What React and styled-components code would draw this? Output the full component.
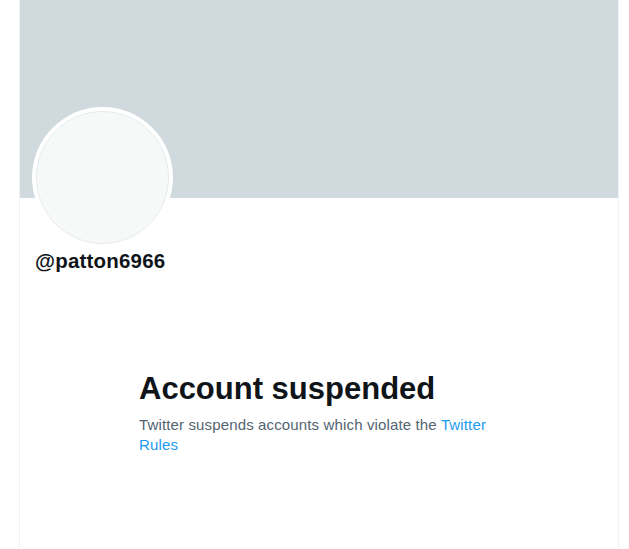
import React from 'react'
import styled, { createGlobalStyle } from 'styled-components'

const Global = createGlobalStyle`
  html, body { margin: 0; padding: 0; background: #ffffff; }
  body { font-family: "Liberation Sans", Arial, sans-serif; }
`

const Column = styled.main`
  margin-left: 19px;
  width: 598px;
  min-height: 549px;
  border-left: 1px solid #eff3f4;
  border-right: 1px solid #eff3f4;
  display: flex;
  flex-direction: column;
`

const Banner = styled.div`
  height: 198px;
  background: #cfd9de;
`

const ProfileHead = styled.div`
  padding: 0 12px;
  display: flex;
  flex-direction: column;
  align-items: flex-start;
`

const Avatar = styled.div`
  width: 141px;
  height: 141px;
  margin-top: -91px;
  box-sizing: border-box;
  border-radius: 50%;
  background: #ffffff;
  padding: 4px;
  display: flex;
`

const AvatarFill = styled.div`
  flex: 1;
  border-radius: 50%;
  background: #f7f9f9;
  border: 1px solid #e7ebec;
`

const Handle = styled.div`
  margin: 1px 0 0 3px;
  font-size: 20.5px;
  line-height: 24px;
  letter-spacing: 0.2px;
  font-weight: 700;
  color: #0f1419;
`

const Empty = styled.section`
  max-width: 400px;
  box-sizing: border-box;
  width: 100%;
  margin: 98px auto 0;
  padding: 0 20px;
`

const Title = styled.h1`
  margin: 0 0 8px;
  font-size: 31px;
  line-height: 36px;
  font-weight: 700;
  color: #0f1419;
`

const Message = styled.p`
  margin: 0;
  font-size: 15px;
  line-height: 20px;
  letter-spacing: 0.14px;
  color: #536471;
`

const RulesLink = styled.a`
  color: #1d9bf0;
  text-decoration: none;
`

export default function App() {
  return (
    <>
      <Global />
      <Column>
        <Banner />
        <ProfileHead>
          <Avatar>
            <AvatarFill />
          </Avatar>
          <Handle>@patton6966</Handle>
        </ProfileHead>
        <Empty>
          <Title>Account suspended</Title>
          <Message>
            Twitter suspends accounts which violate the{' '}
            <RulesLink href="#">Twitter Rules</RulesLink>
          </Message>
        </Empty>
      </Column>
    </>
  )
}
